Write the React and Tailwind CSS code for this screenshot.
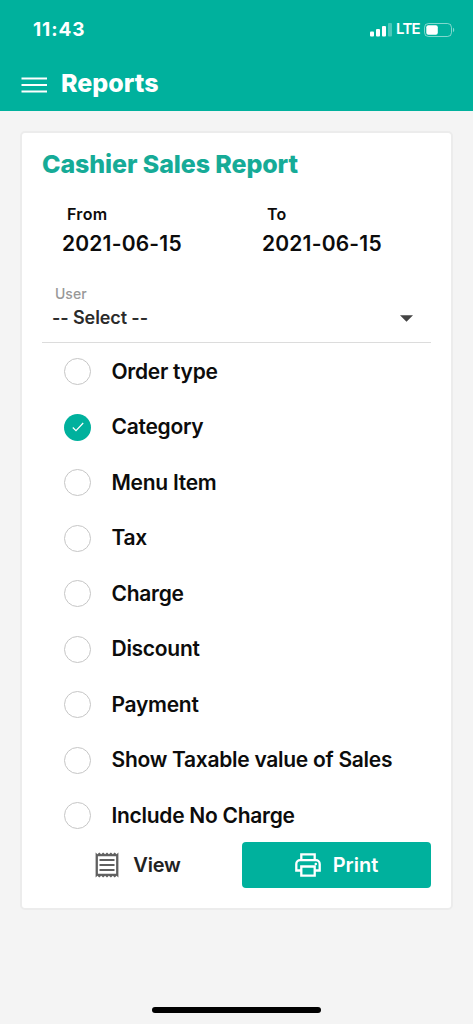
import { useState } from 'react';

const OPTIONS = [
  'Order type',
  'Category',
  'Menu Item',
  'Tax',
  'Charge',
  'Discount',
  'Payment',
  'Show Taxable value of Sales',
  'Include No Charge',
];

function SignalIcon() {
  return (
    <svg width="22" height="14" viewBox="0 0 22 14" fill="white">
      <rect x="0" y="8.5" width="4" height="5" rx="1" />
      <rect x="6" y="6" width="4" height="7.5" rx="1" />
      <rect x="12" y="3" width="4" height="10.5" rx="1" />
      <rect x="18" y="0" width="4" height="13.5" rx="1" opacity="0.3" />
    </svg>
  );
}

function BatteryIcon() {
  return (
    <svg width="31" height="14" viewBox="0 0 31 14" fill="none">
      <rect x="0.5" y="0.5" width="27" height="13" rx="4" stroke="white" strokeOpacity="0.5" />
      <rect x="2.3" y="2.3" width="11.5" height="9.4" rx="2" fill="white" />
      <path d="M29 4.8c1.6.6 1.6 3.8 0 4.4z" fill="white" fillOpacity="0.5" />
    </svg>
  );
}

function ReceiptIcon() {
  return (
    <svg width="24" height="26" viewBox="0 0 24 26" fill="none">
      <path
        d="M0.6 0.5L2.4 2.2L4.3 0.5L6.2 2.2L8.1 0.5L10.1 2.2L12 0.5L13.9 2.2L15.9 0.5L17.8 2.2L19.7 0.5L21.6 2.2L23.4 0.5V25.5L21.6 23.8L19.7 25.5L17.8 23.8L15.9 25.5L13.9 23.8L12 25.5L10.1 23.8L8.1 25.5L6.2 23.8L4.3 25.5L2.4 23.8L0.6 25.5Z M2.9 4.3V21.7H21.1V4.3Z"
        fill="#606060"
        fillRule="evenodd"
      />
      <path d="M4.5 8H19.5M4.5 13H19.5M4.5 18H19.5" stroke="#606060" strokeWidth="2.1" />
    </svg>
  );
}

function PrinterIcon() {
  return (
    <svg width="26" height="24" viewBox="0 0 26 24" fill="none" stroke="white" strokeWidth="2.3">
      <path d="M6.3 7V1.3H19.7V7" />
      <path d="M6.3 17.5H1.3V11A3.8 3.8 0 0 1 5.1 7.2H20.9A3.8 3.8 0 0 1 24.7 11V17.5H19.7" />
      <path d="M6.3 13.5H19.7V22.7H6.3Z" />
      <circle cx="20.8" cy="11" r="1.3" fill="white" stroke="none" />
    </svg>
  );
}

function DateField({ label, value }) {
  return (
    <div className="w-[200px] shrink-0">
      <div className="pl-[5px] text-[16px] leading-[22px] font-semibold tracking-[0.3px]">{label}</div>
      <div className="mt-[6px] text-[21px] leading-[26px] font-semibold tracking-[0.2px]">{value}</div>
    </div>
  );
}

function OptionRow({ label, checked, onClick }) {
  return (
    <button onClick={onClick} className="flex h-[55.5px] w-full items-center pl-[22px] text-left">
      {checked ? (
        <span className="flex h-[27px] w-[27px] items-center justify-center rounded-full bg-[#00b19d]">
          <svg width="12" height="10" viewBox="0 0 12 10" fill="none" stroke="white" strokeWidth="1.2">
            <path d="M0.8 5.5L4 8.7L11.2 1" />
          </svg>
        </span>
      ) : (
        <span className="h-[27px] w-[27px] rounded-full border-[1.5px] border-[#c6c6c6]" />
      )}
      <span className="ml-[20.5px] text-[21px] font-semibold tracking-[-0.28px]">{label}</span>
    </button>
  );
}

export default function App() {
  const [selected, setSelected] = useState('Category');

  return (
    <div className="flex h-[1024px] w-[473px] flex-col bg-[#f4f4f4] font-['Inter',sans-serif] text-[#0c0c0c]">
      <header className="h-[111px] bg-[#00b19d] text-white">
        <div className="flex h-[59px] items-center justify-between pr-[18px] pl-[33px]">
          <span className="pt-px text-[19px] font-bold tracking-[0.9px]">11:43</span>
          <div className="flex items-center">
            <SignalIcon />
            <span className="mr-[4px] ml-[4px] text-[15px] font-semibold tracking-[-0.7px]">LTE</span>
            <BatteryIcon />
          </div>
        </div>
        <div className="flex h-[52px] items-center pb-[2px] pl-[21px]">
          <svg width="27" height="16" viewBox="0 0 27 16" stroke="white" strokeWidth="2" className="mt-[2px]">
            <path d="M0.5 1.5H26M0.5 8H26M0.5 14.5H26" />
          </svg>
          <h1 className="ml-[13px] text-[25px] font-extrabold">Reports</h1>
        </div>
      </header>

      <main className="mx-[20px] mt-[20px] h-[779px] rounded-[5px] border-2 border-[#ececec] bg-white px-[20px] pt-[13px]">
        <h2 className="text-[25px] leading-[36px] font-extrabold tracking-[-0.1px] text-[#16ab97]">
          Cashier Sales Report
        </h2>
        <div className="mt-[21px] flex pl-[20px]">
          <DateField label="From" value="2021-06-15" />
          <DateField label="To" value="2021-06-15" />
        </div>

        <div className="mt-[27px] h-[59px] border-b border-[#dcdcdc] pl-[10px]">
          <div className="pl-[3px] text-[14px] leading-[20px] font-medium text-[#989898]">User</div>
          <div className="flex items-center justify-between pr-[18px]">
            <span className="text-[18px] leading-[27px] font-semibold tracking-[-0.1px] text-[#2b2b2b]">
              -- Select --
            </span>
            <svg width="13" height="7" viewBox="0 0 13 7" fill="#444" className="mt-[2px]">
              <path d="M0 0.3H13L6.5 6.8Z" />
            </svg>
          </div>
        </div>

        <div className="pt-[0.8px]">
          {OPTIONS.map((option) => (
            <OptionRow
              key={option}
              label={option}
              checked={option === selected}
              onClick={() => setSelected(option)}
            />
          ))}
        </div>

        <div className="-mt-px flex h-[46px]">
          <button className="flex w-[200px] items-center justify-center pr-[8px] text-[20px] font-semibold tracking-[-0.2px] text-[#222]">
            <ReceiptIcon />
            <span className="ml-[14px]">View</span>
          </button>
          <button className="flex w-[189px] items-center justify-center rounded-[4px] bg-[#00b19d] text-[20px] font-semibold text-white">
            <PrinterIcon />
            <span className="ml-[12px]">Print</span>
          </button>
        </div>
      </main>

      <div className="mx-auto mt-[97px] h-[6px] w-[169px] shrink-0 rounded-full bg-black" />
    </div>
  );
}
